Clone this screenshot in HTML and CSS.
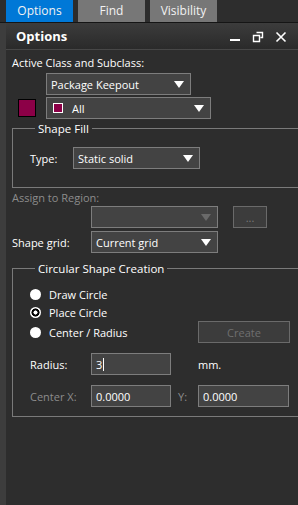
FILE: index.html
```html
<!DOCTYPE html>
<html lang="en">
<head>
  <meta charset="UTF-8">
  <title>Options</title>
  <link rel="stylesheet" href="styles.css">
</head>
<body>

<div class="tabs">
  <div class="tab active">Options</div>
  <div class="tab">Find</div>
  <div class="tab">Visibility</div>
</div>

<div class="layout">
  <div class="strip"></div>
  <div class="panel">
    <div class="titlebar">
      <span class="title">Options</span>
      <div class="win-buttons">
        <svg width="12" height="12" viewBox="0 0 12 12"><rect x="1" y="8" width="10" height="2" fill="#fff"/></svg>
        <svg width="12" height="12" viewBox="0 0 12 12"><path d="M4.5 1.5h6v5h-2M1.5 4.5h6v6h-6z" fill="none" stroke="#fff" stroke-width="1.4"/></svg>
        <svg width="12" height="12" viewBox="0 0 12 12"><path d="M1.5 1.5l9 9M10.5 1.5l-9 9" stroke="#fff" stroke-width="1.6"/></svg>
      </div>
    </div>

    <div class="content">
      <div class="label">Active Class and Subclass:</div>
      <div class="row class-row">
        <div class="select w144">Package Keepout<span class="arrow"></span></div>
      </div>
      <div class="row sub-row">
        <div class="swatch"></div>
        <div class="select w165"><span class="mini-swatch"></span>All<span class="arrow"></span></div>
      </div>

      <fieldset class="group fill-group">
        <legend>Shape Fill</legend>
        <div class="row">
          <span class="field-label w43">Type:</span>
          <div class="select w127">Static solid<span class="arrow"></span></div>
        </div>
      </fieldset>

      <div class="label disabled region-label">Assign to Region:</div>
      <div class="row region-row">
        <div class="select w127 off"><span class="arrow"></span></div>
        <div class="button dots">...</div>
      </div>
      <div class="row grid-row">
        <span class="field-label w79">Shape grid:</span>
        <div class="select w127">Current grid<span class="arrow"></span></div>
      </div>

      <fieldset class="group circle-group">
        <legend>Circular Shape Creation</legend>
        <div class="radio-row first"><span class="radio"></span>Draw Circle</div>
        <div class="radio-row"><span class="radio checked"></span>Place Circle</div>
        <div class="radio-row last">
          <span class="radio"></span><span class="radio-text">Center / Radius</span>
          <div class="button create">Create</div>
        </div>
        <div class="row radius-row">
          <span class="field-label w61">Radius:</span>
          <div class="input w80">3<span class="caret"></span></div>
          <span class="unit">mm.</span>
        </div>
        <div class="row center-row">
          <span class="field-label w61 disabled">Center X:</span>
          <div class="input w80">0.0000</div>
          <span class="y-label disabled">Y:</span>
          <div class="input w91">0.0000</div>
        </div>
      </fieldset>
    </div>
  </div>
</div>

</body>
</html>
```

FILE: styles.css
```css
body {
  margin: 0;
  width: 298px;
  height: 505px;
  overflow: hidden;
  background-color: #2d2d2d;
  color: #ffffff;
  font-family: "Open Sans", "Noto Sans", sans-serif;
  font-size: 11px;
}
.tabs {
  display: flex;
  gap: 5px;
  height: 22px;
  padding-left: 6px;
  border-bottom: 1px solid #151515;
}
.tab {
  width: 67px;
  background-color: #777777;
  text-align: center;
  line-height: 22px;
  font-size: 12px;
  color: #f2f2f2;
}
.tab.active {
  background-color: #0078d7;
}
.layout {
  display: flex;
  height: 482px;
}
.strip {
  width: 6px;
  background-color: #3d3d3d;
}
.panel {
  flex: 1;
  min-width: 0;
  overflow: hidden;
}
.titlebar {
  height: 26px;
  display: flex;
  align-items: center;
  justify-content: space-between;
  padding-left: 10px;
  background: linear-gradient(#3c3c3c, #2a2a2a);
  border-bottom: 1px solid #474747;
}
.title {
  font-weight: bold;
  font-size: 13px;
}
.win-buttons {
  display: flex;
  gap: 11px;
  padding-right: 11px;
  padding-top: 2px;
}
.content {
  padding-left: 6px;
}
.label {
  margin-top: 5px;
  line-height: 15px;
}
.disabled {
  color: #8c8c8c;
}
.row {
  display: flex;
  align-items: center;
}
.class-row {
  margin-top: 3px;
  padding-left: 34px;
}
.sub-row {
  margin-top: 2px;
  padding-left: 6px;
  gap: 10px;
}
.select, .input, .button {
  box-sizing: border-box;
  flex: none;
  height: 22px;
  background-color: #434343;
  border: 1px solid #7d7d7d;
  display: flex;
  align-items: center;
  padding-left: 4px;
  position: relative;
}
.w144 { width: 145px; }
.w165 { width: 165px; }
.w127 { width: 127px; }
.w80 { width: 80px; }
.w91 { width: 91px; }
.arrow {
  position: absolute;
  right: 6px;
  top: 7px;
  border-left: 5px solid transparent;
  border-right: 5px solid transparent;
  border-top: 7px solid #ffffff;
}
.select.off .arrow {
  border-top-color: #6a6a6a;
}
.swatch {
  box-sizing: border-box;
  width: 18px;
  height: 18px;
  background-color: #8c0047;
  border: 1px solid #000000;
}
.mini-swatch {
  box-sizing: border-box;
  width: 10px;
  height: 10px;
  background-color: #8c0047;
  border: 1px solid #ffffff;
  margin: 0 9px 0 2px;
}
.group {
  margin: 0 -30px 0 0;
  padding: 0 0 0 17px;
  border: 1px solid #7a7a7a;
}
.group legend {
  margin-left: 5px;
  padding: 0 3px;
  line-height: 15px;
  font-size: 11.5px;
}
.fill-group {
  margin-top: 2px;
  padding-bottom: 18px;
}
.fill-group .row {
  margin-top: 11px;
}
.field-label {
  flex: none;
}
.w43 { width: 43px; }
.w61 { width: 61px; }
.w79 { width: 79px; }
.region-label {
  margin-top: 2px;
}
.region-row {
  margin-top: 1px;
  padding-left: 79px;
}
.dots {
  width: 34px;
  margin-left: 15px;
  justify-content: center;
  padding-left: 0;
  color: #7a7a7a;
  background-color: #3c3c3c;
  border-color: #6a6a6a;
}
.grid-row {
  margin-top: 3px;
}
.circle-group {
  margin-top: 8px;
  padding-bottom: 9px;
}
.radio-row {
  display: flex;
  align-items: center;
  height: 18px;
}
.radio-row.first {
  margin-top: 9px;
}
.radio-row.last {
  height: 22px;
}
.radio {
  width: 11px;
  height: 11px;
  border-radius: 50%;
  background-color: #ffffff;
  margin-right: 8px;
}
.radio.checked {
  background: radial-gradient(circle, #ffffff 0 1.8px, #000000 2.3px 3.8px, #ffffff 4.3px);
}
.radio-text {
  width: 149px;
}
.create {
  width: 92px;
  justify-content: center;
  padding-left: 0;
  color: #6f6f6f;
  background-color: #3c3c3c;
  border-color: #6a6a6a;
}
.radius-row {
  margin-top: 10px;
}
.caret {
  width: 1px;
  height: 13px;
  background-color: #ffffff;
  margin-left: 1px;
}
.unit {
  margin-left: 27px;
}
.center-row {
  margin-top: 10px;
}
.y-label {
  width: 20px;
  padding-left: 7px;
}
```
